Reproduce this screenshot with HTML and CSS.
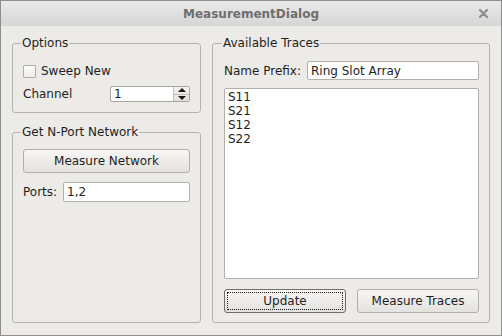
FILE: index.html
```html
<!DOCTYPE html>
<html lang="en">
<head>
  <meta charset="UTF-8">
  <title>MeasurementDialog</title>
  <link rel="stylesheet" href="styles.css">
</head>
<body>
  <div class="ventana">
    <!-- Barra de titulo -->
    <div class="titulo">
      <span class="titulo-texto">MeasurementDialog</span>
      <svg class="cerrar" width="9" height="9" viewBox="0 0 9 9">
        <path d="M1 1 L8 8 M8 1 L1 8" stroke="#8c8c8c" stroke-width="2.2" stroke-linecap="round"/>
      </svg>
    </div>

    <div class="contenido">
      <div class="columna">
        <!-- Opciones -->
        <fieldset class="grupo opciones">
          <legend>Options</legend>
          <div class="fila">
            <span class="check"></span>
            <span>Sweep New</span>
          </div>
          <div class="fila">
            <span class="etiqueta canal">Channel</span>
            <div class="spin">
              <span class="spin-valor">1</span>
              <span class="spin-flechas">
                <span class="flecha arriba"></span>
                <span class="flecha abajo"></span>
              </span>
            </div>
          </div>
        </fieldset>

        <!-- Red de N puertos -->
        <fieldset class="grupo red">
          <legend>Get N-Port Network</legend>
          <button class="boton ancho">Measure Network</button>
          <div class="fila puertos">
            <span class="etiqueta">Ports:</span>
            <input class="campo" type="text" value="1,2">
          </div>
        </fieldset>
      </div>

      <!-- Trazas disponibles -->
      <fieldset class="grupo trazas">
        <legend>Available Traces</legend>
        <div class="fila prefijo">
          <span class="etiqueta">Name Prefix:</span>
          <input class="campo" type="text" value="Ring Slot Array">
        </div>
        <div class="lista">
          <div>S11</div>
          <div>S21</div>
          <div>S12</div>
          <div>S22</div>
        </div>
        <div class="botones">
          <button class="boton defecto">Update</button>
          <button class="boton">Measure Traces</button>
        </div>
      </fieldset>
    </div>
  </div>
</body>
</html>
```

FILE: styles.css
```css
body {
  margin: 0;
  font-family: "DejaVu Sans", sans-serif;
  font-size: 12px;
  color: #1e1e1e;
  background: #edebe7;
}

.ventana {
  box-sizing: border-box;
  width: 502px;
  height: 336px;
  border: 1px solid #8e8e8e;
  background: #edebe7;
  display: flex;
  flex-direction: column;
}

.titulo {
  height: 25px;
  flex: none;
  display: flex;
  align-items: center;
  justify-content: center;
  position: relative;
  background: linear-gradient(#e9e9e9, #d6d6d6);
}

.titulo-texto {
  font-weight: bold;
  font-size: 12px;
  color: #6e6e6e;
}

.cerrar {
  position: absolute;
  right: 13px;
  top: 8px;
}

.contenido {
  flex: 1;
  display: grid;
  grid-template-columns: 189px 278px;
  column-gap: 11px;
  padding: 10px 11px 12px 11px;
}

.columna {
  display: flex;
  flex-direction: column;
  gap: 12px;
}

.grupo {
  margin: 0;
  border: 1px solid #b6b2ad;
  border-radius: 3px;
  padding: 11px 10px 8px 10px;
  min-width: 0;
}

.grupo legend {
  padding: 0 1px;
  margin-left: -2px;
  line-height: 14px;
  color: #1e1e1e;
}

.fila {
  display: flex;
  align-items: center;
  height: 20px;
}

.opciones .fila + .fila {
  margin-top: 3px;
}

.check {
  box-sizing: border-box;
  width: 13px;
  height: 13px;
  border: 1px solid #b0ada8;
  border-radius: 1px;
  background: linear-gradient(#fbfbfa, #efedea);
  margin-right: 5px;
}

.etiqueta {
  flex: none;
}

.canal {
  width: 87px;
}

.spin {
  box-sizing: border-box;
  width: 80px;
  height: 16px;
  border: 1px solid #a9a6a1;
  border-radius: 2px;
  background: #fff;
  display: flex;
}

.spin-valor {
  flex: 1;
  padding-left: 3px;
  line-height: 14px;
}

.spin-flechas {
  width: 15px;
  border-left: 1px solid #c4c1bc;
  background: linear-gradient(#f4f3f1, #e2e0dc);
  display: flex;
  flex-direction: column;
}

.flecha {
  flex: 1;
  display: flex;
  align-items: center;
  justify-content: center;
}

.flecha::before {
  content: "";
  border-left: 4px solid transparent;
  border-right: 4px solid transparent;
}

.arriba::before {
  border-bottom: 4px solid #1a1a1a;
}

.abajo {
  border-top: 1px solid #c4c1bc;
}

.abajo::before {
  border-top: 4px solid #1a1a1a;
}

.red {
  flex: 1;
  padding-top: 10px;
}

.boton {
  box-sizing: border-box;
  height: 24px;
  border: 1px solid #b3b0ab;
  border-radius: 3px;
  background: linear-gradient(#f7f6f5, #e4e2de);
  font-family: "DejaVu Sans", sans-serif;
  font-size: 12px;
  color: #1e1e1e;
  padding: 0;
}

.ancho {
  width: 100%;
  display: block;
}

.puertos {
  margin-top: 9px;
}

.puertos .etiqueta {
  width: 40px;
}

.campo {
  box-sizing: border-box;
  flex: 1;
  min-width: 0;
  height: 20px;
  border: 1px solid #b3b0ab;
  border-radius: 2px;
  background: #fff;
  font-family: "DejaVu Sans", sans-serif;
  font-size: 12px;
  color: #1e1e1e;
  padding: 0 3px;
  margin: 0;
}

.trazas {
  display: flex;
  flex-direction: column;
  padding: 11px 10px 9px 11px;
}

.prefijo {
  height: 19px;
}

.prefijo .etiqueta {
  width: 83px;
}

.prefijo .campo {
  height: 19px;
}

.lista {
  flex: 1;
  margin-top: 8px;
  border: 1px solid #b3b0ab;
  border-radius: 2px;
  background: #fff;
  padding: 1px 3px;
  line-height: 14px;
}

.botones {
  margin-top: 10px;
  display: grid;
  grid-template-columns: 1fr 1fr;
  column-gap: 11px;
}

.defecto {
  border-color: #6f6d69;
  outline: 1px dotted #1a1a1a;
  outline-offset: -4px;
}
```
